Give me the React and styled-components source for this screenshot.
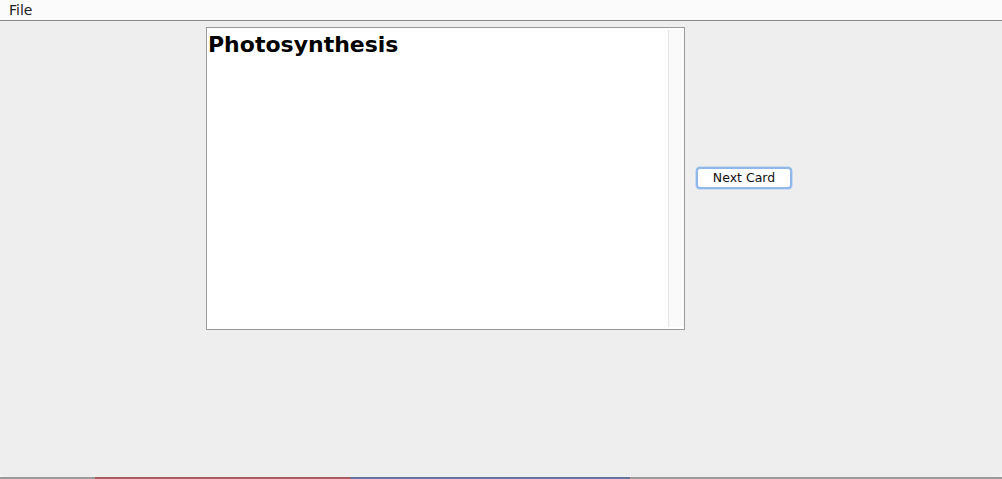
import React from "react";
import styled, { createGlobalStyle } from "styled-components";

const Global = createGlobalStyle`
  html, body { margin: 0; padding: 0; background: #f4f4f4; }
  body { font-family: "DejaVu Sans", "Liberation Sans", sans-serif; }
  #root { width: 1002px; height: 479px; overflow: hidden; }
`;

const Screen = styled.div`
  display: flex;
  flex-direction: column;
  width: 1002px;
  height: 479px;
`;

const Window = styled.div`
  display: flex;
  flex-direction: column;
  height: 477px;
  background: #eeeeee;
  border-radius: 0 0 6px 6px;
  overflow: hidden;
`;

const MenuBar = styled.div`
  display: flex;
  align-items: center;
  height: 20px;
  background: #fbfbfb;
  border-bottom: 1px solid #8a8a8a;
  padding-left: 9px;
`;

const MenuItem = styled.span`
  font-family: "DejaVu Sans", sans-serif;
  font-size: 14px;
  color: #222;
  line-height: 20px;
`;

const Content = styled.div`
  display: flex;
  align-items: center;
  padding: 6px 0 0 206px;
`;

const TextArea = styled.div`
  display: flex;
  width: 477px;
  height: 301px;
  background: #ffffff;
  border: 1px solid #9a9a9a;
`;

const Text = styled.div`
  flex: 1;
  padding: 2px 0 0 1px;
`;

const Title = styled.div`
  font-family: "DejaVu Sans", sans-serif;
  font-weight: bold;
  font-size: 22px;
  color: #000;
  line-height: 30px;
`;

const ScrollTrack = styled.div`
  width: 15px;
  margin: 2px 0;
  background: #fafafa;
  border-left: 1px solid #e6e6e6;
`;

const Button = styled.button`
  margin-left: 11px;
  margin-top: -2px;
  width: 96px;
  height: 22px;
  background: #ffffff;
  border: 2px solid #8fb8ea;
  border-radius: 4px;
  font-family: "DejaVu Sans", sans-serif;
  font-size: 12.5px;
  color: #111;
  padding: 0;
  box-shadow: 0 0 0 0.5px #a9c8ef;
`;

const Strip = styled.div`
  height: 2px;
  background:
    linear-gradient(90deg, transparent 0 95px, rgba(180, 40, 40, 0.55) 95px 350px, rgba(40, 80, 160, 0.5) 350px 630px, transparent 630px),
    #9a9a9a;
`;

export default function App() {
  return (
    <>
      <Global />
      <Screen>
        <Window>
          <MenuBar>
            <MenuItem>File</MenuItem>
          </MenuBar>
          <Content>
            <TextArea>
              <Text>
                <Title>Photosynthesis</Title>
              </Text>
              <ScrollTrack />
            </TextArea>
            <Button>Next Card</Button>
          </Content>
        </Window>
        <Strip />
      </Screen>
    </>
  );
}
